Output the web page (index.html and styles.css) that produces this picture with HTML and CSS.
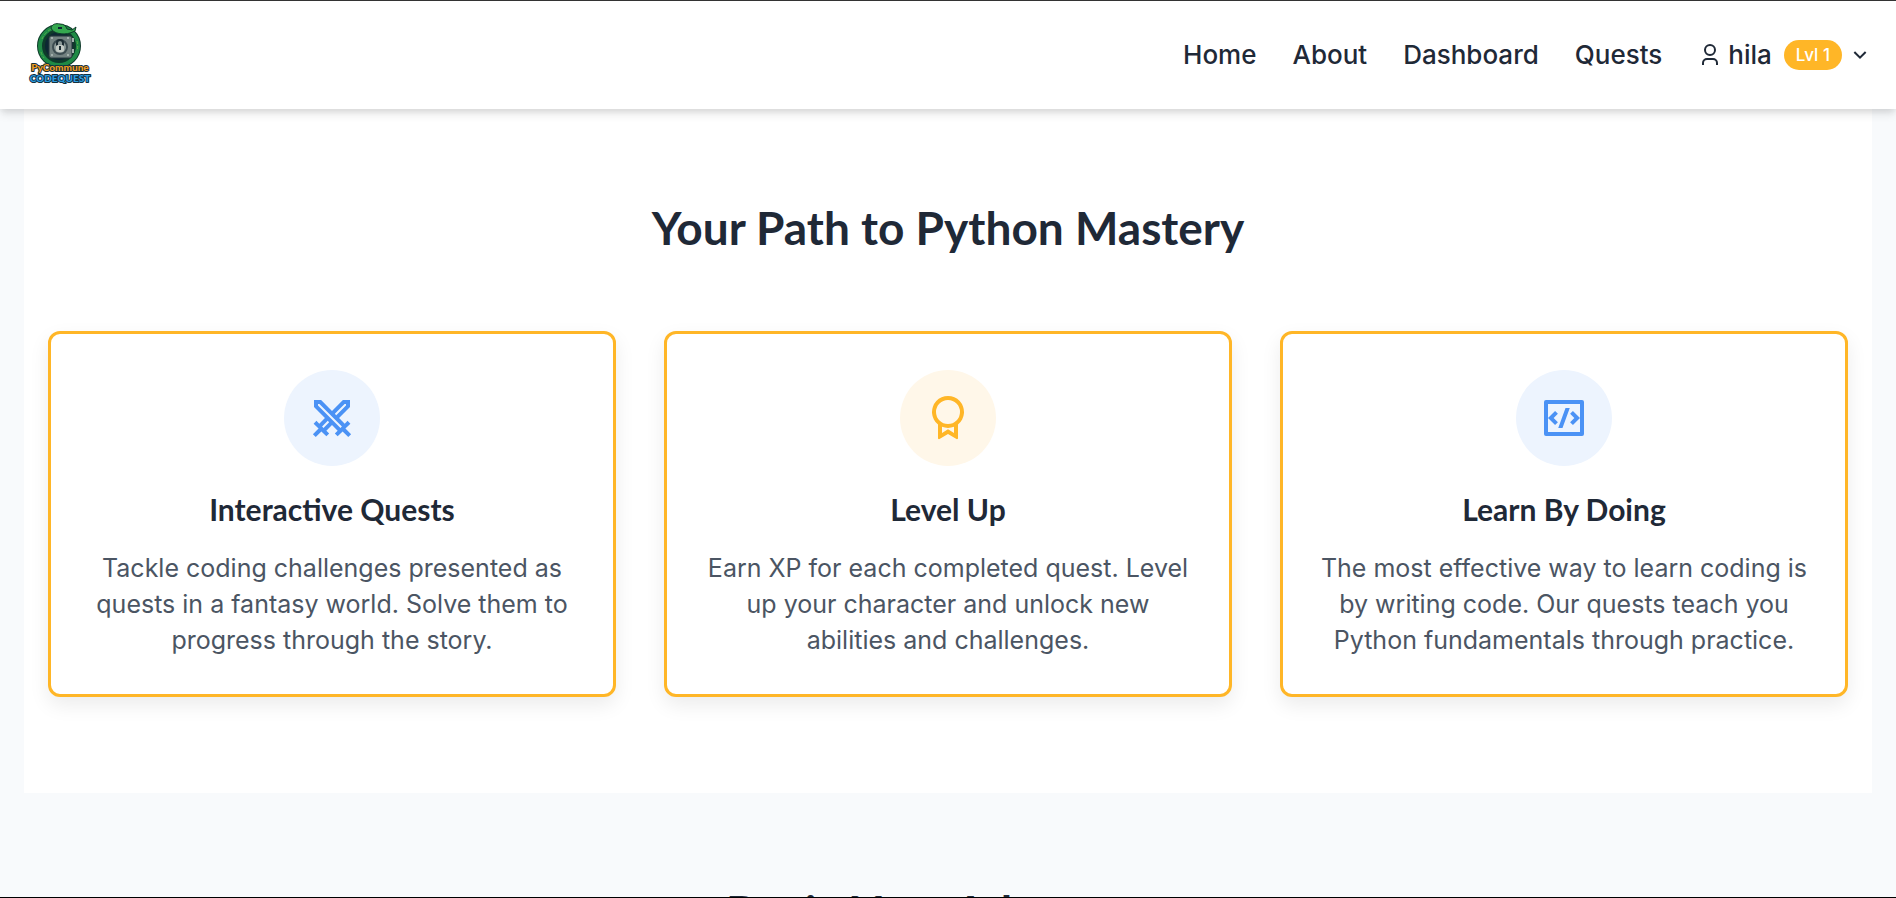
FILE: index.html
```html
<!DOCTYPE html>
<html lang="en">
<head>
<meta charset="utf-8">
<meta name="viewport" content="width=device-width, initial-scale=1">
<title>PyCommune CodeQuest</title>
<link rel="stylesheet" href="styles.css">
</head>
<body>
<div class="page">
  <header class="header">
    <a class="logo" href="#" aria-label="PyCommune CodeQuest">
      <svg width="72" height="72" viewBox="0 0 72 72">
        <circle cx="35" cy="27" r="18" fill="#0d2733" stroke="#0f3b2b" stroke-width="8"/>
        <circle cx="35" cy="27" r="19" fill="none" stroke="#1f8a45" stroke-width="4"/>
        <path d="M18 20a19 19 0 0 1 12-11M17 33a19 19 0 0 0 3 6M53 22a19 19 0 0 1 0 10" fill="none" stroke="#56b04a" stroke-width="1" stroke-dasharray="3 2"/>
        <path d="M27 9c1-4 5-5 9-4 4 0 6 2 7 5l5 1 4-3-1 4-5 2c-6 2-17 1-19-5z" fill="#35a84f" stroke="#0f3b2b"/>
        <path d="M34 9h4" stroke="#0d2733" stroke-width="2"/>
        <rect x="25" y="17" width="23" height="22" rx="2" fill="#728180" stroke="#26383d" stroke-width="1"/>
        <path d="M27 19h2M43 19h2M27 36h2M43 36h2M49 19v4M49 30v4" stroke="#a3b0ac" stroke-width="2"/>
        <circle cx="36" cy="28" r="7" fill="#8b9997" stroke="#3c4c50" stroke-width="2"/>
        <path d="M33 27v-3a3 3 0 0 1 6 0v3" fill="none" stroke="#1c2d33" stroke-width="2"/>
        <rect x="32" y="26" width="8" height="7" rx="2" fill="#c3cbc5"/>
        <path d="M36 27v4" stroke="#1c2d33" stroke-width="2"/>
        <text class="logo-top" x="36" y="52" text-anchor="middle">PyCommune</text>
        <text class="logo-bottom" x="36" y="63" text-anchor="middle">CODEQUEST</text>
      </svg>
    </a>
    <nav class="nav">
      <a href="#">Home</a>
      <a href="#">About</a>
      <a href="#">Dashboard</a>
      <a href="#">Quests</a>
      <button class="account" type="button">
        <svg class="icon-small" viewBox="0 0 24 24"><path d="M20 22h-2v-2a3 3 0 0 0-3-3H9a3 3 0 0 0-3 3v2H4v-2a5 5 0 0 1 5-5h6a5 5 0 0 1 5 5v2zm-8-9a6 6 0 1 1 0-12 6 6 0 0 1 0 12zm0-2a4 4 0 1 0 0-8 4 4 0 0 0 0 8z"/></svg>
        <span class="username">hila</span>
        <span class="badge">Lvl 1</span>
        <svg class="icon-small" viewBox="0 0 24 24"><path d="M12 13.172l4.95-4.95 1.414 1.414L12 16 5.636 9.636 7.05 8.222z"/></svg>
      </button>
    </nav>
  </header>
  <main class="content">
    <section class="features">
      <h2 class="title">Your Path to Python Mastery</h2>
      <div class="cards">
        <article class="card">
          <span class="card-icon blue"><svg viewBox="0 0 24 24"><path d="M17.457 3L21 3.003l.002 3.523-5.467 5.466 2.828 2.829 1.415-1.414 1.414 1.414-2.474 2.475 2.828 2.829-1.414 1.414-2.829-2.829-2.475 2.475-1.414-1.414 1.414-1.415-2.829-2.828-2.828 2.828 1.415 1.415-1.414 1.414-2.475-2.475-2.829 2.829-1.414-1.414 2.829-2.83-2.475-2.474 1.414-1.414 1.414 1.413 2.827-2.828-5.46-5.46L3 3l3.546.003 5.453 5.454L17.457 3zm-7.58 10.406L7.05 16.234l.708.707 2.827-2.828-.707-.707zm9.124-8.405h-.717l-4.87 4.869.706.707 4.881-4.879v-.697zm-14 0v.7l11.241 11.241.707-.707L5.716 5.002l-.715-.001z"/></svg></span>
          <h3>Interactive Quests</h3>
          <p>Tackle coding challenges presented as quests in a fantasy world. Solve them to progress through the story.</p>
        </article>
        <article class="card">
          <span class="card-icon gold"><svg viewBox="0 0 24 24"><path d="M17 15.245v6.872a.5.5 0 0 1-.757.429L12 20l-4.243 2.546a.5.5 0 0 1-.757-.43v-6.87a8 8 0 1 1 10 0zm-8 1.173v3.05l3-1.8 3 1.8v-3.05A7.978 7.978 0 0 1 12 17a7.978 7.978 0 0 1-3-.582zM12 15a6 6 0 1 0 0-12 6 6 0 0 0 0 12z"/></svg></span>
          <h3>Level Up</h3>
          <p>Earn XP for each completed quest. Level up your character and unlock new abilities and challenges.</p>
        </article>
        <article class="card">
          <span class="card-icon blue"><svg viewBox="0 0 24 24"><path d="M3 3h18a1 1 0 0 1 1 1v16a1 1 0 0 1-1 1H3a1 1 0 0 1-1-1V4a1 1 0 0 1 1-1zm1 2v14h16V5H4zm16 7l-3.536 3.536-1.414-1.415L17.172 12 15.05 9.879l1.414-1.415L20 12zM6.828 12l2.122 2.121-1.414 1.415L4 12l3.536-3.536L8.95 9.88 6.828 12zm4.416 5H9.116l3.64-10h2.128l-3.64 10z"/></svg></span>
          <h3>Learn By Doing</h3>
          <p>The most effective way to learn coding is by writing code. Our quests teach you Python fundamentals through practice.</p>
        </article>
      </div>
    </section>
    <section class="begin">
      <h2 class="title">Begin Your Adventure</h2>
    </section>
  </main>
</div>
</body>
</html>
```

FILE: styles.css
```css
* { box-sizing: border-box; }
body {
  margin: 0;
  color: #1f2937;
  font-family: Inter, "Noto Sans", sans-serif;
  font-size: 25px;
  line-height: 36px;
}
h2, h3, p { margin: 0; }
.page {
  height: 100vh;
  overflow: hidden;
  border-top: 1px solid #333;
  border-bottom: 1px solid #000;
  background: #f8fafc;
}
.header {
  position: relative;
  display: flex;
  align-items: center;
  justify-content: space-between;
  padding: 18px 24px;
  background: #fff;
  box-shadow: 0 6px 9px -1px rgba(0, 0, 0, 0.1), 0 3px 6px -1px rgba(0, 0, 0, 0.08);
}
.logo { display: flex; }
.logo-top, .logo-bottom {
  font-family: Lato, sans-serif;
  font-size: 10px;
  font-weight: 900;
  stroke: #12303d;
  stroke-width: 2px;
  stroke-linejoin: round;
  paint-order: stroke;
}
.logo-top { fill: #f09a1c; }
.logo-bottom { fill: #2b9be0; }
.nav {
  display: flex;
  align-items: center;
  gap: 36px;
  font-size: 26px;
  font-weight: 500;
}
.nav a { color: inherit; text-decoration: none; }
.account {
  display: flex;
  align-items: center;
  gap: 6px;
  padding: 0;
  border: 0;
  background: none;
  color: inherit;
  font: inherit;
}
.icon-small { width: 24px; height: 24px; fill: currentColor; }
.badge {
  margin-left: 6px;
  padding: 0 12px;
  border-radius: 15px;
  background: #ffb627;
  color: #fff;
  font-size: 17px;
  line-height: 30px;
}
.content { padding: 0 24px; }
.features { padding: 96px 24px; background: #fff; }
.title {
  font-family: Lato, sans-serif;
  font-size: 46px;
  font-weight: 700;
  line-height: 46px;
  text-align: center;
}
.cards {
  display: grid;
  grid-template-columns: repeat(3, 1fr);
  gap: 48px;
  margin-top: 80px;
}
.card {
  display: flex;
  flex-direction: column;
  align-items: center;
  padding: 36px;
  border: 3px solid #ffb627;
  border-radius: 12px;
  background: #fff;
  box-shadow: 0 8px 20px rgba(0, 0, 0, 0.08);
  text-align: center;
}
.card-icon {
  display: grid;
  place-items: center;
  width: 96px;
  height: 96px;
  border-radius: 50%;
}
.card-icon svg { width: 48px; height: 48px; fill: currentColor; }
.blue { background: #edf4fe; color: #4b92f5; }
.gold { background: #fff7e9; color: #ffb627; }
.card h3 {
  margin: 24px 0 22px;
  font-family: Lato, sans-serif;
  font-size: 30px;
  line-height: 38px;
}
.card p { color: #4b5563; }
.begin { padding: 96px 24px; }
```
